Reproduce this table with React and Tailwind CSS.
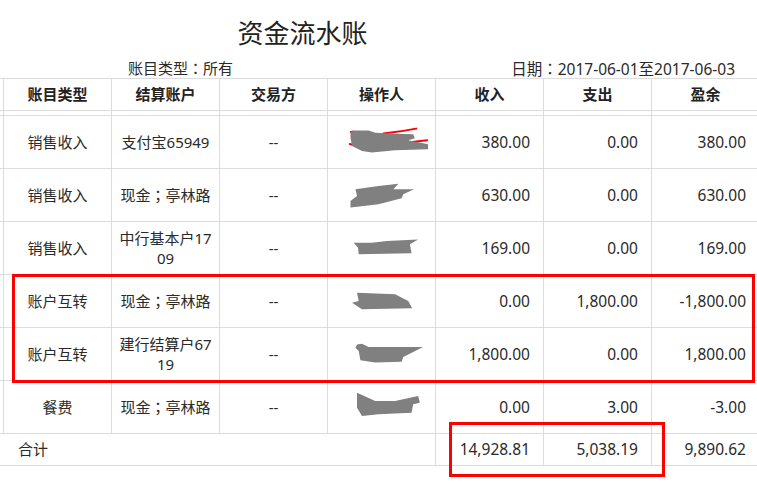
import React from "react";

const FONT = { fontFamily: '"Noto Sans", "Noto Sans CJK SC", sans-serif' };
const PUNCT = { fontFamily: '"Noto Sans CJK TC", "Noto Sans CJK SC", sans-serif' };

function T({ children }) {
  const parts = String(children).split(/([：；])/);
  return (
    <>
      {parts.map((p, i) =>
        p === "：" || p === "；" ? (
          <span key={i} style={PUNCT}>
            {p}
          </span>
        ) : (
          <React.Fragment key={i}>{p}</React.Fragment>
        )
      )}
    </>
  );
}

const shapes = [
  {
    gray: "22.7,15.7 27.7,14.3 41,14.3 47.7,16.7 67.7,17.7 86,18.3 87.7,22.3 81,24.3 101,28.3 101,33.3 67.7,34.3 44.3,36.7 34.3,35 24.3,30 22.7,21.7",
    red: true,
  },
  { gray: "27.7,20.3 51,17 71,14.7 66,20.3 87,20.3 76,25.3 74.3,29.3 51,35.3 22.7,38.7 22.7,32 29.3,27" },
  { gray: "26,20.7 44.3,20.7 59.3,19 91,17.3 82.7,22.3 84.3,31.3 31,32.3 30.3,25.7" },
  { gray: "29.3,17.7 67.7,19.3 81,26 85,33.3 34.3,34.3 24.3,27.7 31,26" },
  { gray: "29.3,16.3 34.3,15.7 41,19 96,19 76,29 74.3,33.7 47.7,34.7 32.7,32.3 31,23 27.7,19.7" },
  { gray: "29.3,11.7 47.7,20 67.7,20 91,15 92.7,21.7 86,23.3 84.3,31.7 51,33.3 34.3,35 29.3,26.7" },
];

function Scribble({ s }) {
  return (
    <svg width="108" height="52" viewBox="0 0 108 52" className="block">
      {s.red && (
        <g stroke="#ff0000" strokeWidth="2" fill="none" strokeLinecap="round">
          <path d="M23 16 L26 15.5" />
          <path d="M56 17.5 Q74 15.5 89 12.5" />
          <path d="M44 26.5 L51 26.8" />
          <path d="M76 27 L100 24.3" />
          <path d="M22 28 L35 31.5" />
        </g>
      )}
      <polygon points={s.gray} fill="#808080" />
    </svg>
  );
}

const rows = [
  { type: "销售收入", acct: "支付宝65949", inc: "380.00", exp: "0.00", bal: "380.00" },
  { type: "销售收入", acct: "现金；亭林路", inc: "630.00", exp: "0.00", bal: "630.00" },
  { type: "销售收入", acct: "中行基本户1709", inc: "169.00", exp: "0.00", bal: "169.00" },
  { type: "账户互转", acct: "现金；亭林路", inc: "0.00", exp: "1,800.00", bal: "-1,800.00" },
  { type: "账户互转", acct: "建行结算户6719", inc: "1,800.00", exp: "0.00", bal: "1,800.00" },
  { type: "餐费", acct: "现金；亭林路", inc: "0.00", exp: "3.00", bal: "-3.00" },
];

const cell = "flex items-center border-l border-[#dcdcdc]";
const center = cell + " justify-center text-center";
const num = cell + " justify-end pr-[13px] text-[15.5px]";

export default function App() {
  return (
    <div
      className="relative w-[757px] h-[486px] overflow-hidden bg-white text-[15px] text-[#2a2a2a]"
      style={FONT}
    >
      <div className="w-[605px] pt-[8px] h-[58px] text-center text-[26px] leading-[50px] text-[#222]">
        资金流水账
      </div>
      <div className="flex justify-between h-[20px] leading-[20px] pl-[128px] pr-[22px] text-[15px]">
        <span>
          <T>账目类型：所有</T>
        </span>
        <span className="text-[15.5px]">
          <T>日期：2017-06-01至2017-06-03</T>
        </span>
      </div>

      <div className="w-[759px]">
        <div className="grid grid-cols-[3px_repeat(7,108px)] h-[32px] border-t border-[#dcdcdc] font-bold text-[#222]">
          <div />
          <div className={center}>账目类型</div>
          <div className={center}>结算账户</div>
          <div className={center}>交易方</div>
          <div className={center}>操作人</div>
          <div className={center}>收入</div>
          <div className={center}>支出</div>
          <div className={center}>盈余</div>
        </div>
        <div className="grid grid-cols-[3px_repeat(7,108px)] h-[5px] border-t border-[#dcdcdc]">
          <div />
          <div className={cell} />
          <div className={cell} />
          <div className={cell} />
          <div className={cell} />
          <div className={cell} />
          <div className={cell} />
          <div className={cell} />
        </div>
        {rows.map((r, i) => (
          <div
            key={i}
            className="grid grid-cols-[3px_repeat(7,108px)] h-[53px] border-t border-[#dcdcdc] leading-[20px]"
          >
            <div />
            <div className={center}>{r.type}</div>
            <div className={center + " px-[6px] break-all"}>
              <span>
                <T>{r.acct}</T>
              </span>
            </div>
            <div className={center}>--</div>
            <div className={cell}>
              <Scribble s={shapes[i]} />
            </div>
            <div className={num}>{r.inc}</div>
            <div className={num}>{r.exp}</div>
            <div className={num}>{r.bal}</div>
          </div>
        ))}
        <div className="grid grid-cols-[435px_repeat(3,108px)] h-[33px] border-t border-b border-[#dcdcdc]">
          <div className="flex items-center pl-[18px]">合计</div>
          <div className={num}>14,928.81</div>
          <div className={num}>5,038.19</div>
          <div className={num}>9,890.62</div>
        </div>
      </div>

      <div className="absolute left-[12px] top-[274px] w-[743px] h-[109px] border-[3px] border-[#ff0000]" />
      <div className="absolute left-[449px] top-[422px] w-[216px] h-[55px] border-[3px] border-[#ff0000]" />
    </div>
  );
}
